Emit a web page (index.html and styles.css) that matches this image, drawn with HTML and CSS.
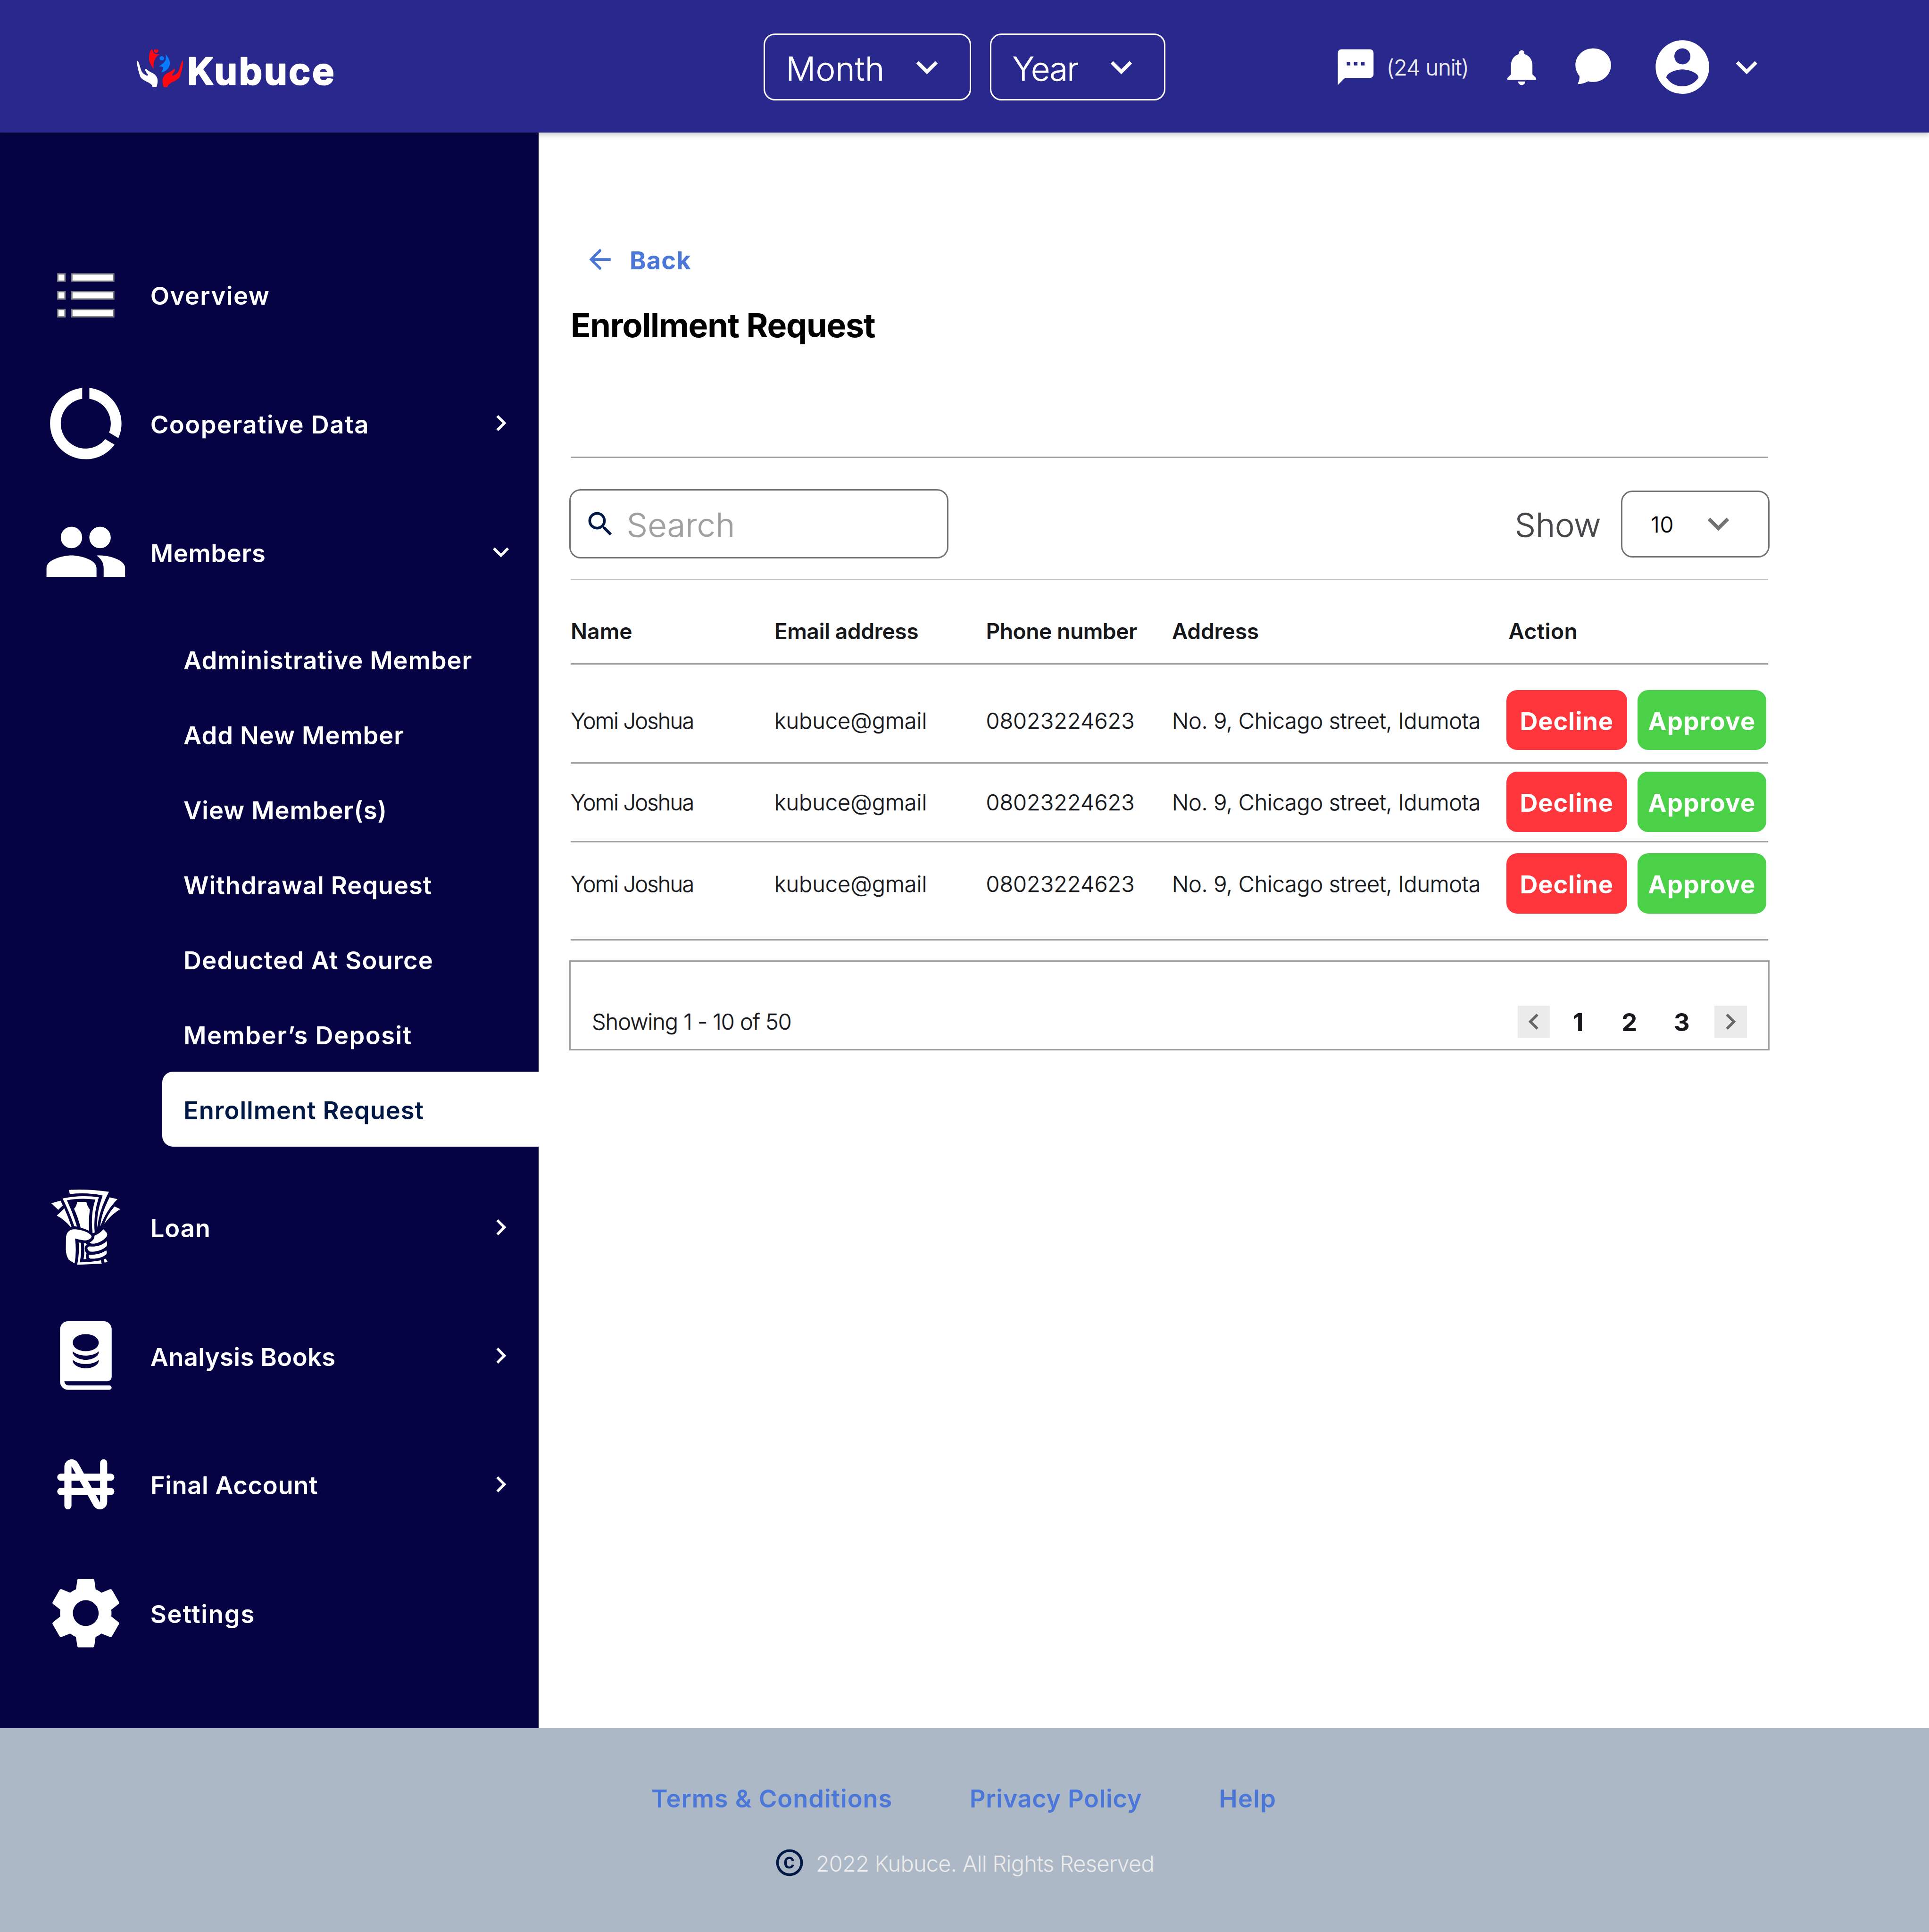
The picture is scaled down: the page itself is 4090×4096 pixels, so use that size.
FILE: index.html
```html
<!DOCTYPE html>
<html lang="en">
<head>
<meta charset="utf-8">
<title>Kubuce – Enrollment Request</title>
<link rel="stylesheet" href="styles.css">
</head>
<body>
<svg class="defs" aria-hidden="true">
  <symbol id="down" viewBox="0 0 24 24"><path d="M16.59 8.59L12 13.17 7.41 8.59 6 10l6 6 6-6z"/></symbol>
  <symbol id="right" viewBox="0 0 24 24"><path d="M10 6L8.59 7.41 13.17 12l-4.58 4.59L10 18l6-6z"/></symbol>
  <symbol id="left" viewBox="0 0 24 24"><path d="M15.41 7.41L14 6l-6 6 6 6 1.41-1.41L10.83 12z"/></symbol>
</svg>
<div class="page">
  <header class="topbar">
    <svg class="logo" viewBox="78 93 1325 252" role="img" aria-label="Kubuce">
      <path fill="#fff" d="M80 170Q85 166 89 176C100 205 103 222 112 242C122 258 135 262 142 267Q152 270 155 265C150 255 136 245 134 228Q137 221 145 226C160 243 180 246 195 258C215 275 219 290 218 310Q216 332 210 345H184C182 328 165 318 140 307C125 297 103 290 98 265C90 240 78 200 80 170Z"/>
      <path fill="#ff0610" transform="translate(469 0) scale(-1 1)" d="M80 170Q85 166 89 176C100 205 103 222 112 242C122 258 135 262 142 267Q152 270 155 265C150 255 136 245 134 228Q137 221 145 226C160 243 180 246 195 258C215 275 219 290 218 310Q216 332 210 345H184C182 328 165 318 140 307C125 297 103 290 98 265C90 240 78 200 80 170Z"/>
      <path fill="#ff0610" d="M175 93H184C184 108 195 122 212 125H232C205 140 185 170 192 228C178 200 160 185 160 150C160 125 167 105 175 93Z"/>
      <path fill="#ff0610" d="M195 93H221A15 15 0 1 1 195 93Z"/>
      <circle fill="#087cff" cx="246" cy="152" r="15"/>
      <path fill="#087cff" d="M272 125C285 140 300 160 300 185C300 215 275 242 240 247C255 230 258 215 252 210C245 206 235 206 224 206C240 198 268 180 272 160Q275 140 272 125Z"/>
      <text class="logo-text" x="417" y="326" textLength="988">Kubuce</text>
    </svg>
    <div class="filters">
      <div class="select month"><span>Month</span><svg class="i32"><use href="#down"/></svg></div>
      <div class="select year"><span>Year</span><svg class="i32"><use href="#down"/></svg></div>
    </div>
    <div class="tools">
      <svg class="i32" viewBox="0 0 24 24"><path d="M20 2H4c-1.1 0-1.99.9-1.99 2L2 22l4-4h14c1.1 0 2-.9 2-2V4c0-1.1-.9-2-2-2zM9 11H7V9h2v2zm4 0h-2V9h2v2zm4 0h-2V9h2v2z"/></svg>
      <span class="units">(24 unit)</span>
      <svg class="i32" viewBox="0 0 24 24"><path d="M12 22c1.1 0 2-.9 2-2h-4c0 1.1.89 2 2 2zm6-6v-5c0-3.07-1.64-5.64-4.5-6.32V4c0-.83-.67-1.5-1.5-1.5s-1.5.67-1.5 1.5v.68C7.63 5.36 6 7.92 6 11v5l-2 2v1h16v-1l-2-2z"/></svg>
      <svg class="chat" viewBox="0 0 27 28"><path d="M13.4.2C20.8.2 26.7 5.800 26.700 12.700S20.800 25.300 13.400 25.300C12 25.300 10.800 25.100 9.700 24.700C7.500 25.900 5 26.700 2.300 26.800Q1.800 26.700 2.100 26C3 24.300 3.300 22.500 3.100 20.800C1.300 18.700.1 15.700.1 12.700.1 5.800 6 .2 13.400.2Z"/></svg>
      <svg class="avatar" viewBox="0 0 24 24"><path d="M12 2C6.480 2 2 6.480 2 12s4.480 10 10 10 10-4.480 10-10S17.520 2 12 2zm0 3c1.660 0 3 1.340 3 3s-1.340 3-3 3-3-1.340-3-3 1.340-3 3-3zm0 14.200c-2.500 0-4.710-1.280-6-3.220.03-1.990 4-3.080 6-3.080 1.990 0 5.970 1.090 6 3.080-1.290 1.940-3.500 3.220-6 3.220z"/></svg>
      <svg class="i32 account-arrow"><use href="#down"/></svg>
    </div>
  </header>

  <div class="body">
    <nav class="sidebar">
      <a class="item"><svg class="i64" viewBox="0 0 64 64"><g fill="#fff" stroke="#77777c" stroke-width="1"><path d="M11.100 16.400h5.400v5.500h-5.400zM21.600 16.400h31.300v5.500H21.600zM11.100 29.700h5.400v5.500h-5.400zM21.600 29.700h31.300v5.500H21.600zM11.100 43h5.400v5.500h-5.400zM21.600 43h31.300v5.500H21.600z"/></g></svg><span class="tr5">Overview</span></a>
      <a class="item"><svg class="i64" viewBox="0 0 24 24"><path d="M13 2.050v3.030c3.390.49 6 3.390 6 6.920 0 .9-.18 1.750-.48 2.540l2.600 1.530c.56-1.240.88-2.620.88-4.070 0-5.180-3.950-9.450-9-9.950zM12 19c-3.870 0-7-3.130-7-7 0-3.530 2.610-6.430 6-6.920V2.050c-5.060.5-9 4.760-9 9.950 0 5.520 4.470 10 9.990 10 3.310 0 6.240-1.610 8.060-4.090l-2.600-1.530C16.170 17.980 14.210 19 12 19z"/></svg><span class="tr5">Cooperative Data</span><svg class="i24"><use href="#right"/></svg></a>
      <a class="item"><svg class="i64" viewBox="0 0 24 24"><path d="M16 11c1.660 0 2.990-1.340 2.990-3S17.660 5 16 5c-1.660 0-3 1.340-3 3s1.340 3 3 3zm-8 0c1.660 0 2.990-1.340 2.990-3S9.660 5 8 5C6.340 5 5 6.340 5 8s1.340 3 3 3zm0 2c-2.330 0-7 1.170-7 3.500V19h14v-2.500c0-2.330-4.670-3.500-7-3.500zm8 0c-.29 0-.62.02-.97.05 1.160.84 1.970 1.970 1.970 3.450V19h6v-2.500c0-2.330-4.670-3.500-7-3.500z"/></svg><span class="tr2">Members</span><svg class="i24"><use href="#down"/></svg></a>
      <div class="submenu">
        <a class="tr3">Administrative Member</a>
        <a class="tr3">Add New Member</a>
        <a class="tr3">View Member(s)</a>
        <a class="tr3">Withdrawal Request</a>
        <a class="tr4">Deducted At Source</a>
        <a class="tr5">Member’s Deposit</a>
        <a class="tr3 active">Enrollment Request</a>
      </div>
      <a class="item"><svg class="i64" viewBox="48 96 576 576"><path fill-rule="evenodd" d="M222 133Q360 126 492 146Q425 270 414 385Q405 290 450 171Q350 148 229 161ZM180 190Q300 165 424 182Q385 300 396 419L382 424Q366 300 400 198Q300 185 209 203Q250 290 277 380L259 377Q225 280 180 190ZM278 213H340Q344 240 363 264Q354 340 359 408Q330 395 301 386Q285 320 257 260Q274 243 278 213ZM104 223L166 205L182 237L151 267ZM192 258Q220 320 240 380L236 384Q190 330 141 306ZM496 183L549 195Q470 275 433 380Q440 290 496 183ZM529 244L568 262Q510 295 460 361Q480 300 529 244ZM203 460C203 420 225 397 260 398C310 398 375 425 375 448C365 470 340 474 325 472Q290 468 264 460Q275 550 261 627Q240 615 222 602Q203 575 202 530ZM455 398L477 422Q484 435 475 448C450 478 410 498 375 494Q366 492 362 487Q395 470 395 440Q425 430 455 398ZM476 477Q483 500 475 512C445 540 400 552 362 547Q345 535 347 522Q352 512 362 513C405 517 450 505 476 477ZM473 539Q482 555 472 567C445 590 400 598 364 594Q352 585 356 568C400 572 440 562 473 539ZM288 486L303 489Q310 550 296 620Q370 618 437 606L443 628L278 636Q294 560 288 486ZM323 491H335L343 499Q328 510 329 527Q330 550 342 558Q333 575 341 598L321 599Q330 550 323 491ZM457 599L470 595L483 617L462 621Z"/></svg><span class="tr3">Loan</span><svg class="i24"><use href="#right"/></svg></a>
      <a class="item"><svg class="i64" viewBox="48 960 576 576"><path fill-rule="evenodd" d="M218 1017H455A55 55 0 0 1 510 1072V1392A28 28 0 0 1 482 1420H192A29 29 0 0 0 221 1449H495A14.500 14.500 0 0 1 495 1478H218A55 55 0 0 1 163 1423V1072A55 55 0 0 1 218 1017ZM336 1104C297 1104 249 1122 249 1161.500S297 1219 336 1219 423 1201 423 1161.500 375 1104 336 1104ZM249 1220V1228C252 1258 298 1277 336 1277S420 1258 423 1228V1220C405 1238 372 1248 336 1248S267 1238 249 1220ZM249 1277V1285C252 1315 298 1334 336 1334S420 1315 423 1285V1277C405 1295 372 1305 336 1305S267 1295 249 1277Z"/></svg><span class="tr1">Analysis Books</span><svg class="i24"><use href="#right"/></svg></a>
      <a class="item"><svg class="i64 naira" viewBox="0 0 24 24"><path d="M7 18V7.052a1.050 1.050 0 0 1 1.968-.51l6.064 10.916a1.050 1.050 0 0 0 1.968-.51V6M5 10h14M5 14h14"/></svg><span class="tr2">Final Account</span><svg class="i24"><use href="#right"/></svg></a>
      <a class="item"><svg class="i64" viewBox="0 0 24 24"><path d="M19.140 12.940c.04-.3.06-.61.06-.94 0-.32-.02-.64-.07-.94l2.030-1.580c.18-.14.23-.41.12-.61l-1.920-3.320c-.12-.22-.37-.29-.59-.22l-2.390.96c-.5-.38-1.030-.7-1.620-.94l-.36-2.540c-.04-.24-.24-.41-.48-.41h-3.840c-.24 0-.43.17-.47.41l-.36 2.540c-.59.24-1.130.57-1.620.94l-2.390-.96c-.22-.08-.47 0-.59.22L2.740 8.870c-.12.21-.08.47.12.61l2.030 1.580c-.05.3-.09.63-.09.94s.02.64.07.94l-2.030 1.580c-.18.14-.23.41-.12.61l1.920 3.320c.12.22.37.29.59.22l2.390-.96c.5.38 1.030.7 1.620.94l.36 2.540c.05.24.24.41.48.41h3.840c.24 0 .44-.17.47-.41l.36-2.540c.59-.24 1.130-.56 1.620-.94l2.390.96c.22.08.47 0 .59-.22l1.920-3.320c.12-.22.07-.47-.12-.61l-2.010-1.580zM12 15.600c-1.980 0-3.600-1.620-3.600-3.600s1.620-3.600 3.600-3.600 3.600 1.620 3.600 3.600-1.620 3.600-3.600 3.600z"/></svg><span class="tr6">Settings</span></a>
    </nav>

    <main class="content">
      <a class="back"><svg class="i24" viewBox="0 0 24 24"><path d="M20 11H7.830l4.880-4.880c.39-.39.39-1.030 0-1.420L12 4l-8 8 8 8 .71-.7c.39-.39.39-1.020 0-1.410L7.830 13H20v-2z"/></svg><span>Back</span></a>
      <h1>Enrollment Request</h1>
      <div class="toolbar">
        <div class="search"><svg class="i24" viewBox="0 0 24 24"><path d="M15.500 14h-.79l-.28-.27C15.410 12.590 16 11.110 16 9.500 16 5.910 13.090 3 9.500 3S3 5.910 3 9.500 5.910 16 9.500 16c1.610 0 3.090-.59 4.230-1.570l.27.28v.79l5 4.990L20.490 19l-4.990-5zm-6 0C7.010 14 5 11.990 5 9.500S7.010 5 9.500 5 14 7.010 14 9.500 11.990 14 9.500 14z"/></svg><span>Search</span></div>
        <div class="show"><span class="show-label">Show</span><div class="select size"><span>10</span><svg class="i32"><use href="#down"/></svg></div></div>
      </div>
      <div class="table">
        <div class="row head"><span>Name</span><span class="tn2">Email address</span><span class="tn2">Phone number</span><span class="tn1">Address</span><span class="action tr1">Action</span></div>
        <div class="row r1"><span class="name">Yomi Joshua</span><span>kubuce@gmail</span><span>08023224623</span><span class="tn1">No. 9, Chicago street, Idumota</span><div class="actions"><button class="decline">Decline</button><button class="approve">Approve</button></div></div>
        <div class="row r2"><span class="name">Yomi Joshua</span><span>kubuce@gmail</span><span>08023224623</span><span class="tn1">No. 9, Chicago street, Idumota</span><div class="actions"><button class="decline">Decline</button><button class="approve">Approve</button></div></div>
        <div class="row r3"><span class="name">Yomi Joshua</span><span>kubuce@gmail</span><span>08023224623</span><span class="tn1">No. 9, Chicago street, Idumota</span><div class="actions"><button class="decline">Decline</button><button class="approve">Approve</button></div></div>
      </div>
      <div class="pagination">
        <span class="summary">Showing 1 - 10 of 50</span>
        <div class="pages">
          <a class="step"><svg class="i24"><use href="#left"/></svg></a>
          <a class="num">1</a><a class="num">2</a><a class="num">3</a>
          <a class="step next"><svg class="i24"><use href="#right"/></svg></a>
        </div>
      </div>
    </main>
  </div>

  <footer class="footer">
    <div class="links"><a class="tr3">Terms &amp; Conditions</a><a class="tr2">Privacy Policy</a><a class="tr4">Help</a></div>
    <div class="copyright"><svg class="i24" viewBox="0 0 24 24"><path d="M10.080 10.860c.05-.33.16-.62.3-.87s.34-.46.59-.62c.24-.15.54-.22.91-.23.23.01.44.05.63.13.2.09.38.21.52.36s.25.33.34.53.13.42.14.64h1.790c-.02-.47-.11-.9-.28-1.290s-.4-.73-.7-1.010-.66-.5-1.080-.66-.88-.23-1.390-.23c-.65 0-1.220.11-1.700.34s-.88.53-1.200.92-.56.84-.71 1.360S8 11.290 8 11.870v.27c0 .58.08 1.120.23 1.640s.39.97.71 1.350.72.69 1.200.91 1.050.34 1.700.34c.47 0 .91-.08 1.320-.23s.77-.36 1.080-.63.56-.58.74-.94.29-.74.3-1.150h-1.790c-.01.21-.06.4-.15.58s-.21.33-.36.46-.32.23-.52.3c-.19.07-.39.09-.6.1-.36-.01-.66-.08-.89-.23-.25-.16-.45-.37-.59-.62s-.25-.55-.3-.88-.08-.67-.08-1v-.27c0-.35.03-.68.08-1.010zM12 2C6.480 2 2 6.480 2 12s4.480 10 10 10 10-4.480 10-10S17.520 2 12 2zm0 18c-4.410 0-8-3.590-8-8s3.590-8 8-8 8 3.590 8 8-3.590 8-8 8z"/></svg><span>2022 Kubuce. All Rights Reserved</span></div>
  </footer>
</div>
</body>
</html>
```
FILE: styles.css
```css
/* 1rem is ten layout units; the page is 144rem wide */
html { font-size: 28.403px; }
* { box-sizing: border-box; }
body { margin: 0; background: #fff; font-family: Inter, "Liberation Sans", sans-serif; font-size: 1.85rem; line-height: 1.3; }
svg { display: block; flex: none; fill: currentColor; }
span, a { white-space: nowrap; }
.defs { display: none; }
.i24 { width: 2.4rem; height: 2.4rem; }
.i32 { width: 3.2rem; height: 3.2rem; }
.i64 { width: 6.4rem; height: 6.4rem; }

/* tracking steps */
.tn2 { letter-spacing: -.018rem; }
.tn1 { letter-spacing: -.01rem; }
.tr1 { letter-spacing: .013rem; }
.tr2 { letter-spacing: .022rem; }
.tr3 { letter-spacing: .032rem; }
.tr4 { letter-spacing: .043rem; }
.tr5 { letter-spacing: .052rem; }
.tr6 { letter-spacing: .062rem; }

/* light text carries a hairline stroke for a slightly fuller weight */
.select span, .units, .search span, .show-label, .r1, .r2, .r3, .summary { -webkit-text-stroke: .01em currentColor; }
.actions { -webkit-text-stroke: 0; }

.page { width: 4090px; height: 4096px; display: flex; flex-direction: column; overflow: hidden; }

/* top bar */
.topbar { position: relative; flex: none; height: 9.9rem; padding: .1rem 0 0 10.2rem; display: flex; align-items: center; background: #29288d; color: #fff; box-shadow: 0 .2rem .35rem rgba(0, 0, 0, .18); }
.logo { width: 14.722rem; height: 2.8rem; margin-top: .2rem; overflow: visible; }
.logo-text { font: 700 248px Inter, sans-serif; fill: #fff; stroke: #fff; stroke-width: 8px; stroke-linejoin: round; }
.filters { display: flex; gap: 1.4rem; margin-left: 32.08rem; }
.select { height: 5rem; display: flex; align-items: center; justify-content: space-between; border: 3px solid #fff; border-radius: .85rem; font-size: 2.46rem; font-weight: 300; }
.select span { padding-top: .3rem; }
.month { width: 15.5rem; padding: 0 1.6rem 0 1.57rem; letter-spacing: .01rem; }
.year { width: 13.1rem; padding: 0 1.6rem 0 1.57rem; letter-spacing: -.06rem; }
.tools { display: flex; align-items: center; margin-left: 12.6rem; }
.units { width: 8.5rem; margin-left: .7rem; padding-top: .12rem; font-size: 1.65rem; font-weight: 300; letter-spacing: -.036rem; color: #ebebeb; }
.units + .i32 + .chat { width: 2.7rem; height: 2.8rem; margin-left: 2.4rem; }
.avatar { width: 4.8rem; height: 4.8rem; margin-left: 2.9rem; }
.account-arrow { margin-left: .8rem; }

.body { flex: none; height: 119.1rem; display: flex; }

/* side navigation */
.sidebar { width: 40.2rem; padding-top: 7.3rem; background: #050344; color: #fff; font-weight: 600; }
.item { height: 9.6rem; padding: 0 1.6rem 0 3.2rem; display: flex; align-items: center; }
.item span { flex: 1; margin-left: 1.62rem; padding-top: .18rem; }
.naira { fill: none; stroke: currentColor; stroke-width: 2; stroke-linecap: round; stroke-linejoin: round; }
.submenu { display: flex; flex-direction: column; margin: .4rem 0 1.2rem 12.1rem; }
.submenu a { height: 5.6rem; display: flex; align-items: center; padding: .18rem 0 0 1.6rem; }
.submenu .active { background: #fff; color: #001845; border-radius: .8rem 0 0 .8rem; }

/* content */
.content { width: 91.8rem; padding: 8.26rem 0 0 2.4rem; }
.back { display: flex; align-items: center; height: 2.4rem; padding-left: 1rem; color: #4b78d8; font-weight: 700; letter-spacing: .038rem; }
.back span { margin-left: 1rem; padding-top: .17rem; }
h1 { margin: 2.14rem 0 0; height: 3.2rem; line-height: 3.2rem; font-size: 2.47rem; font-weight: 680; letter-spacing: -.043rem; color: #000; }
.toolbar { margin-top: 8.2rem; border-top: 3px solid #a1a1a2; border-bottom: 3px solid #c6c6c7; height: 9.2rem; padding: 2.3rem 0 0; display: flex; justify-content: space-between; align-items: flex-start; }
.search { width: 28.3rem; height: 5.2rem; margin-left: -.1rem; padding-left: 1rem; display: flex; align-items: center; border: 3px solid #737376; border-radius: .85rem; font-size: 2.46rem; font-weight: 300; letter-spacing: .012rem; color: #a0a0a3; }
.search svg { color: #001845; }
.search span { margin-left: .78rem; padding-top: .2rem; }
.show { display: flex; align-items: center; margin: .1rem -.1rem 0 0; }
.show-label { margin-right: 1.5rem; padding-top: .2rem; font-size: 2.46rem; font-weight: 300; color: #47474b; }
.size { width: 11.1rem; padding: 0 2.13rem; border-color: #737376; color: #737376; font-size: 1.65rem; letter-spacing: .03rem; }
.size span { color: #000; padding-top: .12rem; }

/* requests table */
.row { display: grid; grid-template-columns: 15.2rem 15.8rem 13.88rem 24.97rem 1fr; align-items: center; border-bottom: 3px solid #a1a1a2; color: #17181c; font-size: 1.65rem; font-weight: 300; }
.head { height: 6.3rem; padding-top: 1.3rem; font-size: 1.63rem; font-weight: 600; }
.name { letter-spacing: -.062rem; }
.r1 { height: 7.4rem; padding: 1.9rem 0 .9rem; }
.r2 { height: 5.9rem; padding: .6rem 0 .7rem; }
.r3 { height: 7.3rem; padding: .8rem 0 1.9rem; }
.row > span { padding-top: .1rem; }
.row > .action { padding-left: .15rem; }
.actions { display: flex; gap: .8rem; }
.actions button { height: 4.5rem; padding: .15rem 0 0; border: 0; border-radius: .8rem; color: #fff; font: 680 1.85rem Inter, sans-serif; }
.decline { width: 9rem; background: #ff353c; letter-spacing: .028rem; }
.approve { width: 9.6rem; background: #4bd148; letter-spacing: .049rem; }

/* pagination */
.pagination { margin: 1.5rem -.1rem 0; height: 6.7rem; padding: 3.2rem 1.7rem 0 1.58rem; display: flex; justify-content: space-between; align-items: flex-start; border: 3px solid #a1a1a2; }
.summary { height: 2.4rem; line-height: 2.6rem; font-size: 1.65rem; font-weight: 300; letter-spacing: -.035rem; color: #17181c; }
.pages { display: grid; grid-template-columns: 2.4rem 4.22rem 3.44rem 4.38rem 2.66rem; align-items: center; margin-right: -.1rem; }
.step { background: #ebebeb; color: #666; }
.next { margin-left: .26rem; }
.num { text-align: center; font-weight: 680; line-height: 2.4rem; padding-top: .1rem; color: #17181c; }

/* footer */
.footer { flex: 1; padding-top: 4.05rem; background: #adb8c7; }
.links { display: flex; justify-content: center; gap: 5.75rem; height: 2.4rem; line-height: 2.4rem; padding-right: .1rem; font-weight: 600; color: #4b78d8; }
.copyright { display: flex; align-items: center; justify-content: center; gap: .75rem; margin-top: 2.4rem; height: 2.4rem; padding-right: .1rem; color: #001845; }
.copyright span { padding-top: .16rem; font-size: 1.65rem; font-weight: 300; letter-spacing: -.025rem; color: #ebebeb; }
```
